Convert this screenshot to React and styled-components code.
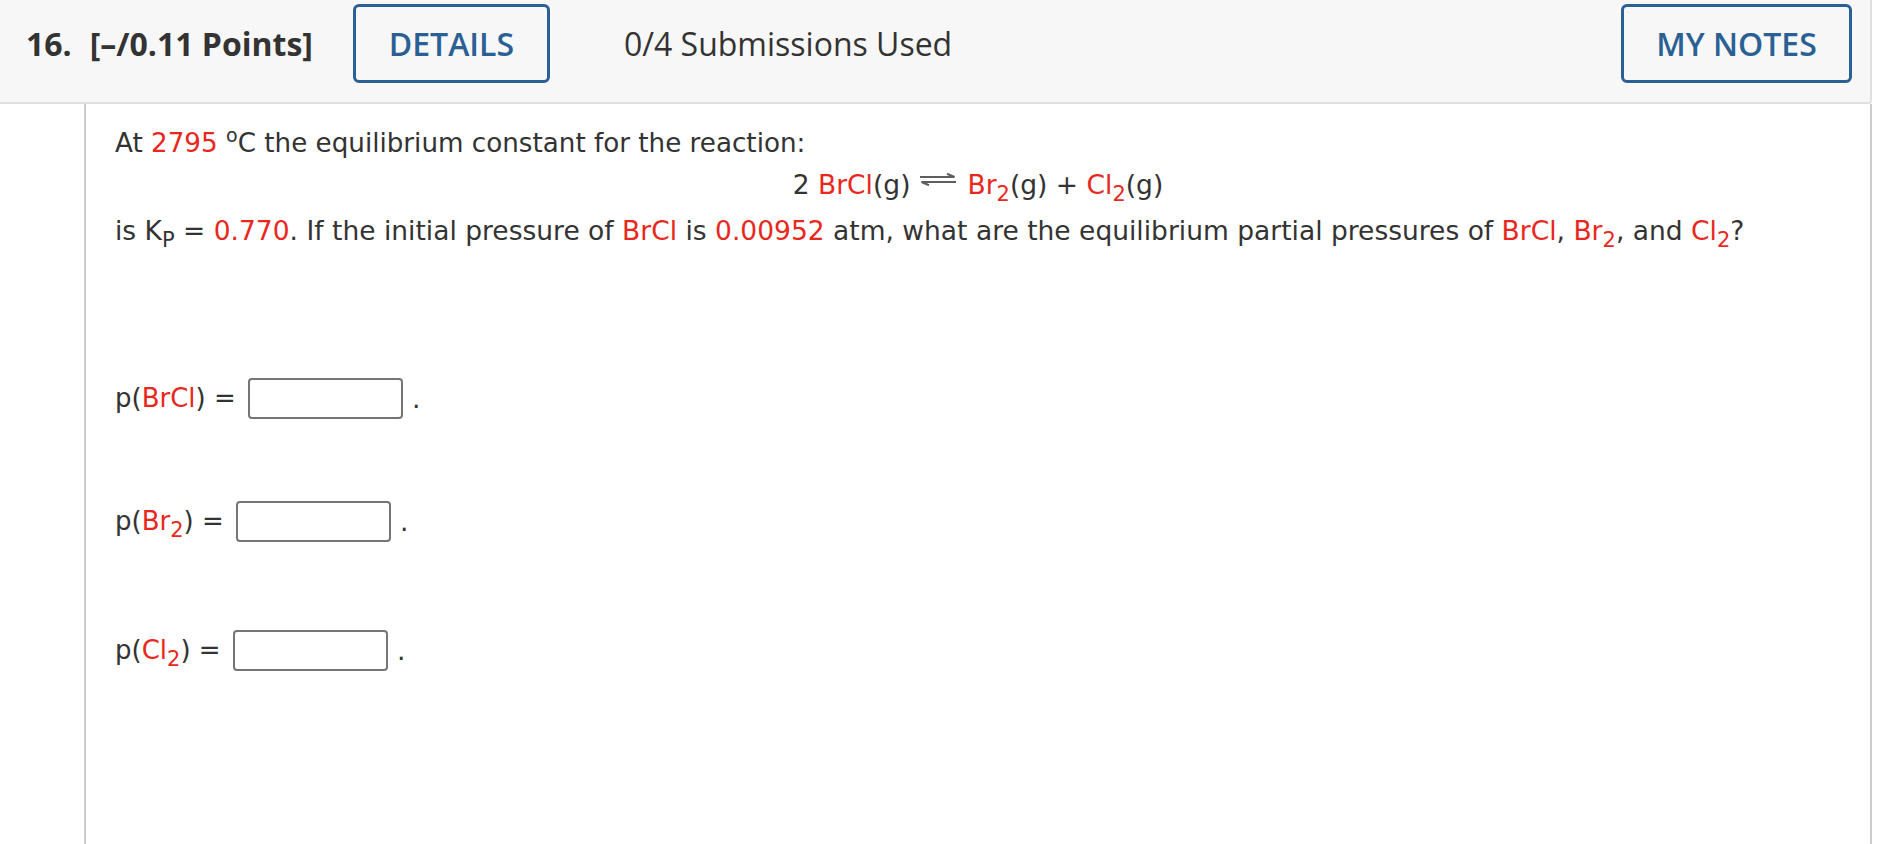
import styled, { createGlobalStyle } from "styled-components";

const GlobalStyle = createGlobalStyle`
  body {
    margin: 0;
    background: #ffffff;
  }
`;

const Page = styled.div`
  width: 1872px;
`;

const Header = styled.div`
  display: flex;
  align-items: center;
  height: 104px;
  box-sizing: border-box;
  padding: 4px 18px 19px 26px;
  background: #f7f7f7;
  border-bottom: 2px solid #e0e0e0;
  border-right: 2px solid #e0e0e0;
  border-bottom-right-radius: 4px;
  font-family: "Open Sans", "Noto Sans", sans-serif;
  color: #333333;
`;

const Title = styled.div`
  font-size: 32px;
  font-weight: 700;
  white-space: nowrap;
`;

const Number = styled.span`
  margin-right: 18px;
`;

const HeaderButton = styled.button`
  display: flex;
  align-items: center;
  justify-content: center;
  width: ${(p) => p.width}px;
  height: 79px;
  margin-left: ${(p) => (p.right ? "auto" : "40px")};
  padding: 0;
  background: transparent;
  border: 3px solid #2b6094;
  border-radius: 6px;
  font-family: "Open Sans", "Noto Sans", sans-serif;
  font-size: 32px;
  font-weight: 600;
  color: #2b6094;
  text-transform: uppercase;
`;

const Submissions = styled.div`
  margin-left: 74px;
  font-size: 32px;
  font-weight: 400;
  white-space: nowrap;
`;

const Panel = styled.div`
  margin-left: 84px;
  box-sizing: border-box;
  min-height: 740px;
  padding: 18px 29px 40px 29px;
  border-left: 2px solid #cccccc;
  border-right: 2px solid #cccccc;
  font-family: "DejaVu Sans", Verdana, sans-serif;
  font-size: 26.5px;
  line-height: 42px;
  color: #333333;
`;

const Line = styled.div`
  margin-top: ${(p) => p.gap || 0}px;
  font-size: ${(p) => p.size || 26.5}px;
  text-align: ${(p) => (p.center ? "center" : "left")};
  white-space: nowrap;
`;

const Red = styled.span`
  color: #e8281d;
`;

const Sub = styled.sub`
  font-size: 21px;
  line-height: 0;
  vertical-align: -7px;
`;

const Sup = styled.sup`
  font-size: 19px;
  line-height: 0;
  vertical-align: 10px;
`;

const ArrowSvg = styled.svg`
  width: 36px;
  height: 13px;
  margin: 0 11px 0 10px;
  vertical-align: 8px;
`;

const Answers = styled.div`
  display: flex;
  flex-direction: column;
  margin-top: 126px;
`;

const Row = styled.div`
  display: flex;
  align-items: center;
  height: 41px;
  margin-bottom: ${(p) => p.gap}px;
`;

const Label = styled.span`
  font-size: 26px;
  line-height: 41px;
  white-space: pre;
`;

const AnswerBox = styled.input`
  width: 155px;
  height: 41px;
  box-sizing: border-box;
  margin: 0 0 0 4px;
  border: 2px solid #757575;
  border-radius: 4px;
  background: #ffffff;
  font-family: inherit;
  font-size: 20px;
`;

const Period = styled.span`
  margin-left: 9px;
  line-height: 41px;
`;

const EquilibriumArrow = () => (
  <ArrowSvg viewBox="0 0 36 13">
    <path d="M0 4 H34.5 L27 0.8" fill="none" stroke="#5e5e5e" strokeWidth="2.2" />
    <path d="M36 9 H1.5 L9 12.2" fill="none" stroke="#5e5e5e" strokeWidth="2.2" />
  </ArrowSvg>
);

const answers = [
  { id: "brcl", label: <Red>BrCl</Red>, gap: 82 },
  {
    id: "br2",
    label: (
      <Red>
        Br<Sub>2</Sub>
      </Red>
    ),
    gap: 88,
  },
  {
    id: "cl2",
    label: (
      <Red>
        Cl<Sub>2</Sub>
      </Red>
    ),
    gap: 0,
  },
];

const App = () => {
  return (
    <Page>
      <GlobalStyle />
      <Header>
        <Title>
          <Number>16.</Number>[–/0.11 Points]
        </Title>
        <HeaderButton width={197}>Details</HeaderButton>
        <Submissions>0/4 Submissions Used</Submissions>
        <HeaderButton width={231} right>
          My Notes
        </HeaderButton>
      </Header>
      <Panel>
        <Line size={26.2}>
          At <Red>2795</Red> <Sup>o</Sup>C the equilibrium constant for the reaction:
        </Line>
        <Line center>
          2 <Red>BrCl</Red>(g)
          <EquilibriumArrow />
          <Red>
            Br<Sub>2</Sub>
          </Red>
          (g) +{" "}
          <Red>
            Cl<Sub>2</Sub>
          </Red>
          (g)
        </Line>
        <Line gap={4}>
          is K<Sub>P</Sub> = <Red>0.770</Red>. If the initial pressure of <Red>BrCl</Red> is{" "}
          <Red>0.00952</Red> atm, what are the equilibrium partial pressures of <Red>BrCl</Red>,{" "}
          <Red>
            Br<Sub>2</Sub>
          </Red>
          , and{" "}
          <Red>
            Cl<Sub>2</Sub>
          </Red>
          ?
        </Line>
        <Answers>
          {answers.map((a) => (
            <Row key={a.id} gap={a.gap}>
              <Label>
                p({a.label}) ={" "}
              </Label>
              <AnswerBox type="text" />
              <Period>.</Period>
            </Row>
          ))}
        </Answers>
      </Panel>
    </Page>
  );
};

export default App;
